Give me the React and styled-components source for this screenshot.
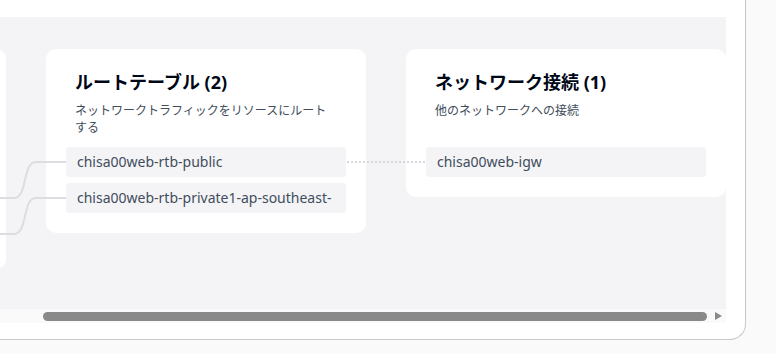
import styled, { createGlobalStyle } from "styled-components";

const GlobalStyle = createGlobalStyle`
  html, body {
    margin: 0;
    padding: 0;
    background: #fafafa;
  }
  body {
    font-family: "Noto Sans", "Noto Sans CJK JP", sans-serif;
    width: 776px;
    height: 354px;
    overflow: hidden;
  }
`;

const Panel = styled.div`
  width: 746px;
  height: 340px;
  box-sizing: border-box;
  padding: 17px 20px 0 0;
  background: #fff;
  border-right: 1px solid #c6c6cd;
  border-bottom: 1px solid #c6c6cd;
  border-bottom-right-radius: 16px;
  display: flex;
  flex-direction: column;
`;

const Canvas = styled.div`
  position: relative;
  width: 726px;
  height: 292px;
  background: #f4f4f6;
  overflow: hidden;
`;

const Row = styled.div`
  display: flex;
  align-items: flex-start;
  gap: 40px;
  padding-top: 32px;
  margin-left: -314px;
`;

const Card = styled.div`
  flex: 0 0 320px;
  background: #fff;
  border-radius: 10px;
  box-sizing: border-box;
  padding-bottom: 20px;
`;

const Header = styled.div`
  height: 98px;
  box-sizing: border-box;
  padding: 21px 29px 0;
`;

const Title = styled.h2`
  margin: 0;
  font-size: 18px;
  line-height: 24px;
  font-weight: 700;
  color: #000716;
`;

const Desc = styled.p`
  margin: 8px 0 0;
  font-size: 12px;
  line-height: 17px;
  color: #414d5c;
`;

const List = styled.div`
  display: flex;
  flex-direction: column;
  gap: 6px;
  padding: 0 20px;
`;

const Item = styled.div`
  height: 30px;
  line-height: 30px;
  padding: 0 6px 0 11px;
  background: #f4f4f6;
  border-radius: 3px;
  font-size: 14px;
  color: #414d5c;
  overflow: hidden;
`;

const Links = styled.svg`
  position: absolute;
  left: 0;
  top: 0;
  pointer-events: none;
`;

const Track = styled.div`
  width: 726px;
  height: 14px;
  background: #fafafa;
  display: flex;
  align-items: center;
  box-sizing: border-box;
  padding-left: 43px;
  gap: 7px;
`;

const Thumb = styled.div`
  width: 664px;
  height: 9px;
  border-radius: 5px;
  background: #898989;
`;

const Arrow = styled.div`
  width: 0;
  height: 0;
  margin-left: 1px;
  border-top: 4px solid transparent;
  border-bottom: 4px solid transparent;
  border-left: 7px solid #8a8a8a;
`;

const cards = [
  { id: "subnets", title: "", desc: "", items: ["", "", ""] },
  {
    id: "rtb",
    title: "ルートテーブル (2)",
    desc: "ネットワークトラフィックをリソースにルートする",
    items: ["chisa00web-rtb-public", "chisa00web-rtb-private1-ap-southeast-1a"],
  },
  {
    id: "conn",
    title: "ネットワーク接続 (1)",
    desc: "他のネットワークへの接続",
    items: ["chisa00web-igw"],
  },
];

export default function App() {
  return (
    <>
      <GlobalStyle />
      <Panel>
        <Canvas>
          <Row>
            {cards.map((c) => (
              <Card key={c.id}>
                <Header>
                  {c.title && <Title>{c.title}</Title>}
                  {c.desc && <Desc>{c.desc}</Desc>}
                </Header>
                <List>
                  {c.items.map((it, i) => (
                    <Item key={i}>{it}</Item>
                  ))}
                </List>
              </Card>
            ))}
          </Row>
          <Links width="726" height="292" viewBox="0 17 726 292">
            <g fill="none" stroke="#dcdce1" strokeWidth="2">
              <path d="M -10 198 H 14 C 28 198, 22 162, 36 162 H 66" />
              <path d="M -10 234 H 14 C 28 234, 22 198, 36 198 H 66" />
            </g>
            <path
              d="M 347 162 H 426"
              stroke="#d6d6db"
              strokeWidth="2"
              strokeDasharray="2 2"
              fill="none"
            />
          </Links>
        </Canvas>
        <Track>
          <Thumb />
          <Arrow />
        </Track>
      </Panel>
    </>
  );
}
